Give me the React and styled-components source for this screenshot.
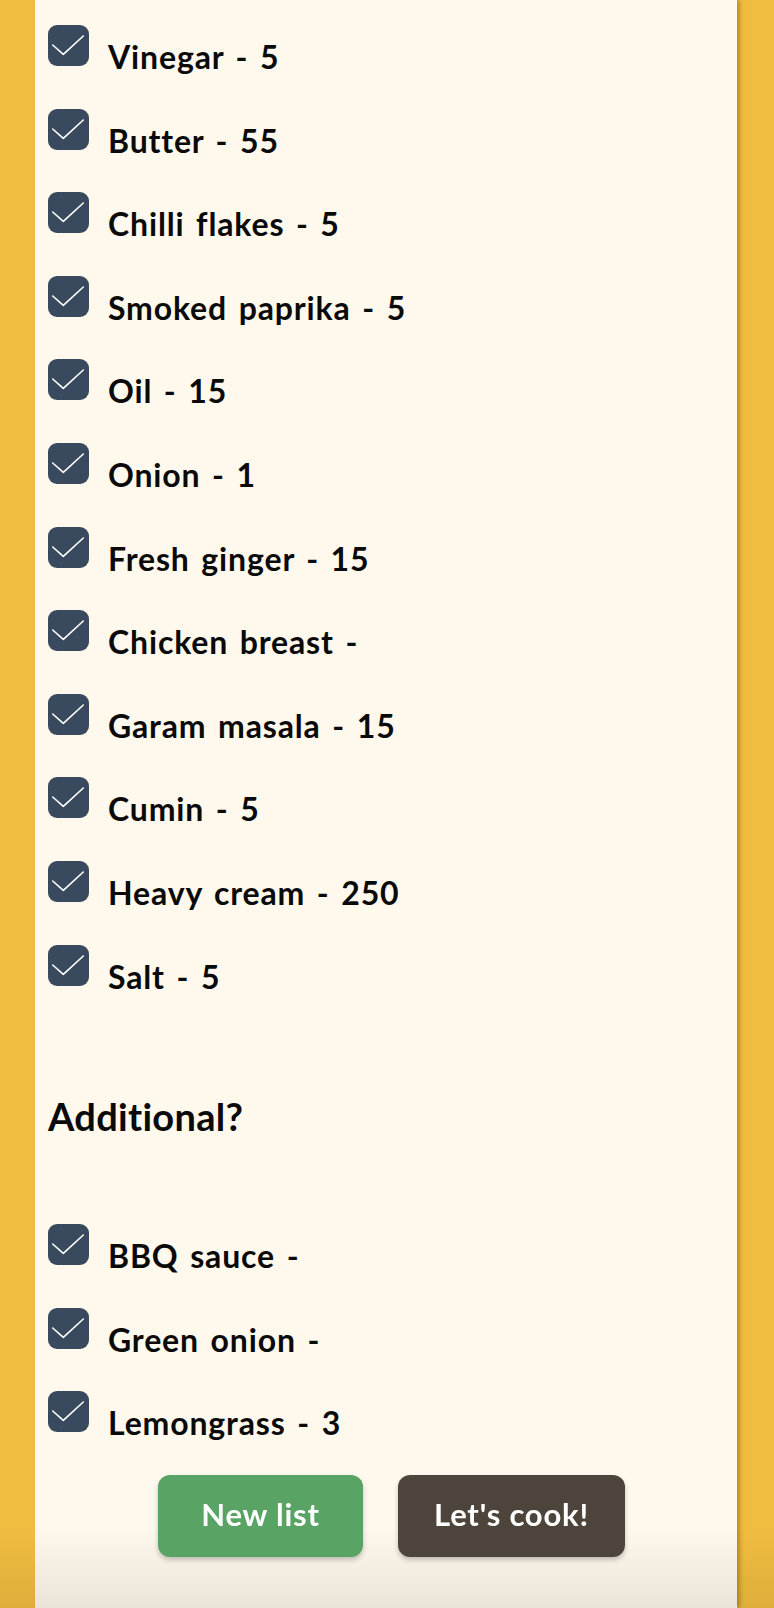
import styled, { createGlobalStyle } from "styled-components";

const GlobalStyle = createGlobalStyle`
  html, body {
    margin: 0;
    padding: 0;
    background: #f1bd41;
    font-family: Lato, "Noto Sans", sans-serif;
  }
`;

const main = [
  ["Vinegar", "5"],
  ["Butter", "55"],
  ["Chilli flakes", "5"],
  ["Smoked paprika", "5"],
  ["Oil", "15"],
  ["Onion", "1"],
  ["Fresh ginger", "15"],
  ["Chicken breast", ""],
  ["Garam masala", "15"],
  ["Cumin", "5"],
  ["Heavy cream", "250"],
  ["Salt", "5"],
];

const extra = [
  ["BBQ sauce", ""],
  ["Green onion", ""],
  ["Lemongrass", "3"],
];

function Check() {
  return (
    <Box>
      <svg width="41" height="41" viewBox="0 0 41 41">
        <path
          d="M4.7 20 L15.3 29.3 L35.3 11"
          fill="none"
          stroke="#fff"
          strokeWidth="1.6"
          strokeLinecap="round"
          strokeLinejoin="round"
        />
      </svg>
    </Box>
  );
}

function Item({ name, qty }) {
  return (
    <Row>
      <Check />
      <Label>
        {name} - {qty}
      </Label>
    </Row>
  );
}

export default function App() {
  return (
    <>
      <GlobalStyle />
      <Card>
        <List>
          {main.map(([n, q]) => (
            <Item key={n} name={n} qty={q} />
          ))}
        </List>
        <Heading>Additional?</Heading>
        <List>
          {extra.map(([n, q]) => (
            <Item key={n} name={n} qty={q} />
          ))}
        </List>
        <Actions>
          <Button $bg="#59a365" $w={205}>New list</Button>
          <Button $bg="#4d453b" $w={227}>Let's cook!</Button>
        </Actions>
      </Card>
      <Fade />
    </>
  );
}

const Card = styled.main`
  margin-left: 35px;
  width: 702px;
  min-height: 1608px;
  box-sizing: border-box;
  padding: 25px 0 0 13px;
  background: #fef8ed;
  box-shadow: 3px 0 4px rgba(80, 55, 0, 0.35);
`;

const List = styled.div`
  display: flex;
  flex-direction: column;
`;

const Row = styled.div`
  display: flex;
  align-items: flex-start;
  height: 83.6px;
`;

const Box = styled.div`
  width: 41px;
  height: 41px;
  flex-shrink: 0;
  border-radius: 9px;
  background: #394a5e;
  svg {
    display: block;
  }
`;

const Label = styled.span`
  margin-left: 19px;
  padding-top: 14px;
  font-size: 32px;
  line-height: 36px;
  font-weight: 700;
  color: #0a0a0a;
  letter-spacing: 0.85px;
  word-spacing: 3px;
`;

const Heading = styled.h2`
  margin: 66px 0 0;
  height: 130px;
  font-size: 38px;
  line-height: 44px;
  font-weight: 700;
  color: #0a0a0a;
  letter-spacing: 0.3px;
`;

const Actions = styled.div`
  display: flex;
  gap: 35px;
  padding-left: 110px;
  position: relative;
  z-index: 2;
`;

const Button = styled.button`
  width: ${(p) => p.$w}px;
  height: 82px;
  padding: 0 0 4px;
  border: none;
  border-radius: 12px;
  background: ${(p) => p.$bg};
  color: #fff;
  font-family: Lato, "Noto Sans", sans-serif;
  font-size: 31px;
  font-weight: 700;
  letter-spacing: 0.8px;
  box-shadow: 0 3px 5px rgba(0, 0, 0, 0.22);
`;

const Fade = styled.div`
  position: fixed;
  left: 0;
  right: 0;
  bottom: 0;
  height: 80px;
  pointer-events: none;
  background: linear-gradient(rgba(0, 0, 0, 0), rgba(40, 30, 0, 0.09));
`;
